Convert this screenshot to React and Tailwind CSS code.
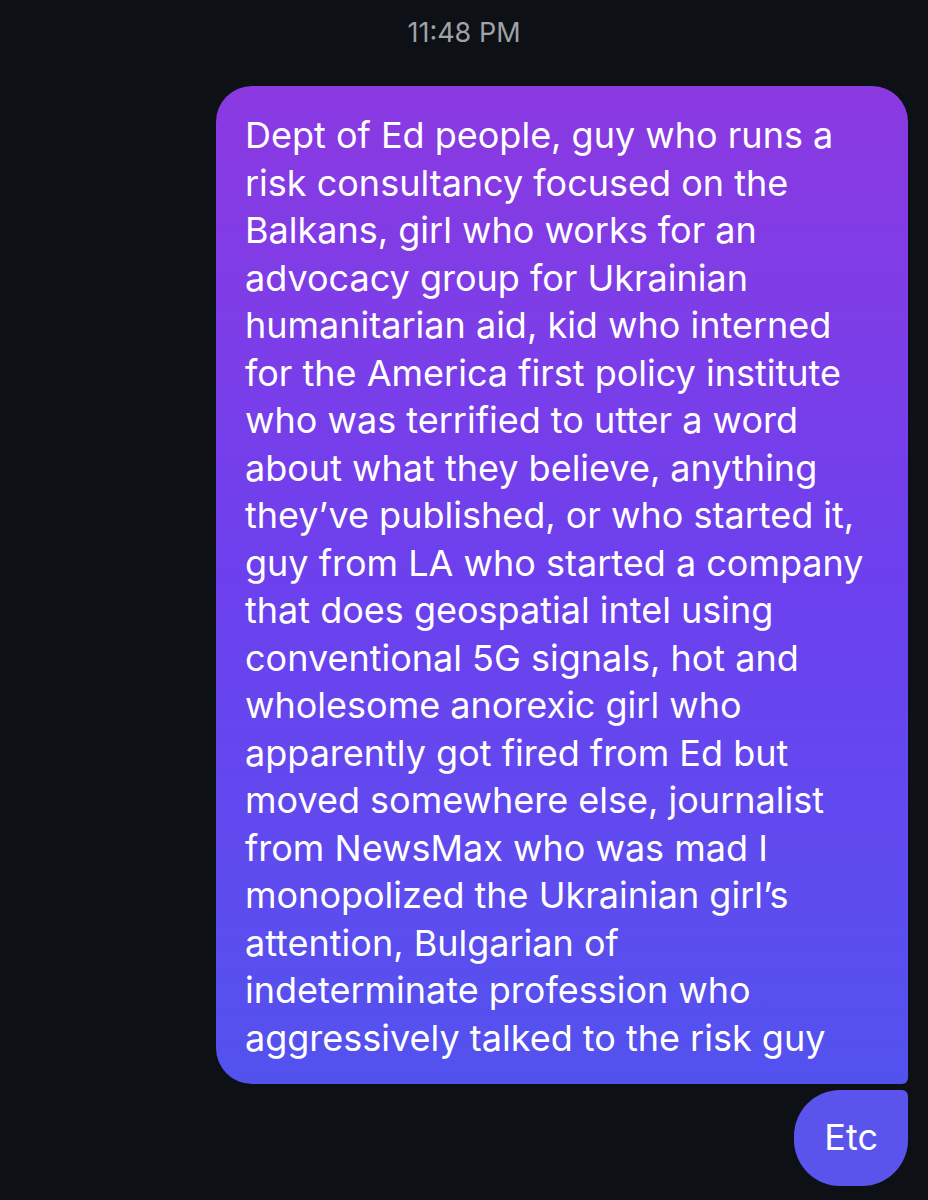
import React from "react";

const lines = [
  "Dept of Ed people, guy who runs a",
  "risk consultancy focused on the",
  "Balkans, girl who works for an",
  "advocacy group for Ukrainian",
  "humanitarian aid, kid who interned",
  "for the America first policy institute",
  "who was terrified to utter a word",
  "about what they believe, anything",
  "they\u2019ve published, or who started it,",
  "guy from LA who started a company",
  "that does geospatial intel using",
  "conventional 5G signals, hot and",
  "wholesome anorexic girl who",
  "apparently got fired from Ed but",
  "moved somewhere else, journalist",
  "from NewsMax who was mad I",
  "monopolized the Ukrainian girl\u2019s",
  "attention, Bulgarian of",
  "indeterminate profession who",
  "aggressively talked to the risk guy",
];

export default function App() {
  return (
    <div
      className="min-h-[1200px] w-[928px] bg-[#0d1014] text-white"
      style={{ fontFamily: "Inter, 'Noto Sans', sans-serif" }}
    >
      <div className="flex justify-center pt-[14px]">
        <span className="text-[27px] leading-[38px] text-[#9fa2a8]">11:48 PM</span>
      </div>

      <div className="flex flex-col items-end gap-[6px] pr-[20px] pt-[34px]">
        <div className="w-[692px] rounded-[36px] rounded-br-[6px] bg-gradient-to-b from-[#8b39e1] via-[#6c40ee] to-[#5252ef] px-[29px] pt-[26px] pb-[22px] text-[36px] leading-[47.5px]">
          {lines.map((line, i) => (
            <div key={i} className="whitespace-nowrap">
              {line}
            </div>
          ))}
        </div>
        <div className="rounded-[46px] rounded-tr-[6px] bg-[#5a54ec] px-[30px] py-[24px] text-[36px] leading-[47.5px]">
          Etc
        </div>
      </div>
    </div>
  );
}
